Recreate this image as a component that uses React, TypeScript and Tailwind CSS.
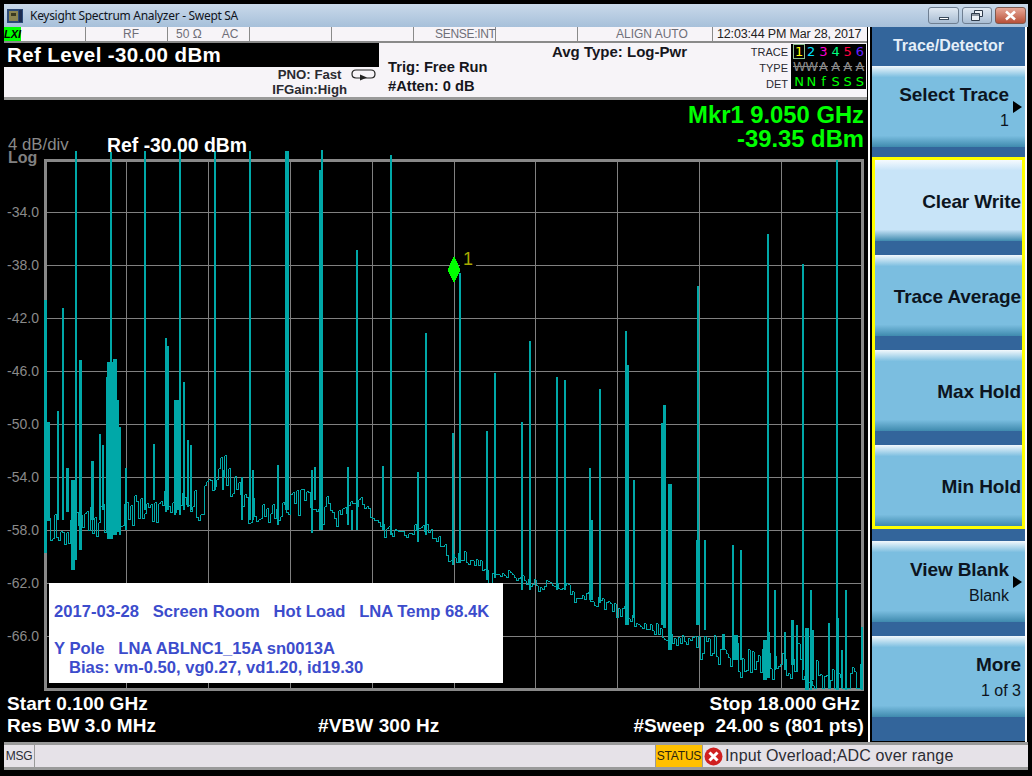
import React from 'react';

const TEAL = '#00a8a8';
const GRID_X = [126, 208, 290, 372, 454, 536, 618, 700, 782];
const GRID_Y = [212, 265, 318, 371, 424, 477, 530, 583, 636];
const AXIS = ['-34.0', '-38.0', '-42.0', '-46.0', '-50.0', '-54.0', '-58.0', '-62.0', '-66.0'];

// noise floor anchors [x, y] read off the trace
const FLOOR: number[][] = [
  [47, 520], [70, 525], [100, 512], [130, 505], [150, 520], [165, 505], [185, 505], [200, 506], [213, 485], [222, 460],
  [232, 485], [245, 508], [262, 518], [285, 513], [300, 502], [320, 510], [340, 514], [352, 506], [362, 503],
  [372, 518], [385, 532], [400, 535], [420, 528], [435, 535], [450, 558], [465, 558], [480, 565], [490, 580],
  [505, 575], [525, 578], [540, 587], [560, 588], [580, 597], [600, 603], [620, 612], [640, 622], [660, 630],
  [680, 640], [700, 640], [720, 656], [740, 660], [760, 660], [780, 666], [800, 662], [820, 680], [840, 688], [858, 684], [864, 660],
];

// [x, top, bottom, width]
const SPIKES: number[][] = [
  [44, 300, 553, 3], [46, 422, 521, 4], [57, 411, 520, 2], [62, 308, 520, 2], [66, 468, 512, 3], [71, 480, 570, 4], [75, 151, 560, 2], [79, 360, 550, 3],
  [91, 461, 520, 3], [99, 434, 520, 2], [102, 445, 510, 2], [106, 377, 530, 2], [110, 152, 539, 2], [107, 362, 539, 6], [113, 359, 535, 4], [117, 400, 532, 2], [119, 427, 535, 2], [125, 468, 530, 2],
  [144, 151, 510, 2], [153, 444, 500, 2], [165, 338, 512, 2], [167, 346, 510, 2], [174, 400, 515, 2], [179, 150, 515, 2], [176, 400, 510, 4], [183, 382, 510, 2], [187, 440, 507, 2], [190, 445, 510, 2],
  [214, 151, 490, 2], [222, 470, 490, 2], [241, 477, 520, 2], [249, 151, 520, 2], [252, 470, 520, 2], [277, 465, 525, 2], [285, 151, 510, 4], [311, 470, 533, 2], [314, 467, 500, 2], [321, 150, 530, 2], [319, 170, 530, 4],
  [347, 467, 525, 2], [351, 510, 530, 2], [356, 250, 530, 2], [382, 466, 530, 2], [390, 155, 535, 2], [417, 472, 542, 2], [425, 333, 535, 2],
  [452, 433, 565, 2], [460, 273, 563, 2], [487, 431, 580, 2], [495, 373, 578, 2], [522, 422, 590, 2], [530, 341, 590, 2], [557, 377, 590, 2], [565, 380, 590, 2],
  [590, 468, 600, 2], [591, 520, 600, 3], [600, 389, 603, 2], [626, 331, 625, 2], [627, 365, 625, 3], [634, 480, 618, 2], [662, 423, 625, 2], [664, 405, 628, 3], [669, 484, 650, 4],
  [697, 540, 625, 4], [705, 540, 630, 2], [733, 545, 660, 2], [741, 550, 660, 2], [768, 234, 660, 2], [775, 590, 670, 2], [803, 264, 670, 2], [698, 286, 625, 2],
  [811, 590, 690, 2], [837, 160, 690, 2], [846, 590, 690, 2], [723, 634, 650, 3], [735, 635, 660, 4], [764, 640, 680, 4], [768, 632, 678, 3], [785, 632, 670, 2], [792, 620, 665, 3], [797, 625, 672, 2], [806, 628, 690, 4], [812, 630, 680, 3], [829, 623, 688, 2], [838, 618, 690, 2], [842, 650, 688, 2], [862, 627, 690, 2],
];

function floorAt(x: number) {
  for (let i = 1; i < FLOOR.length; i++) {
    if (x <= FLOOR[i][0]) {
      const [x0, y0] = FLOOR[i - 1];
      const [x1, y1] = FLOOR[i];
      return y0 + ((y1 - y0) * (x - x0)) / (x1 - x0);
    }
  }
  return FLOOR[FLOOR.length - 1][1];
}

// small repeatable jitter so the trace is the same on every load
function tracePath() {
  let seed = 17;
  const rnd = () => {
    seed = (seed * 16807) % 2147483647;
    return seed / 2147483647 - 0.5;
  };
  let d = '';
  for (let x = 47; x <= 864; x += 2) {
    const amp = x < 135 ? 34 : x < 340 ? 30 : x < 560 ? 12 : x < 700 ? 16 : 38;
    const y = Math.min(689, floorAt(x) + rnd() * amp + (x < 135 ? 8 : 0));
    d += d ? ` H${x} V${y.toFixed(0)}` : `M${x} ${y.toFixed(0)}`;
  }
  return d;
}

const Chart: React.FC = () => (
  <svg width={824} height={542} viewBox="44 150 824 542" className="block" shapeRendering="crispEdges">
    {GRID_X.map(x => <rect key={x} x={x} y={160} width={1} height={530} fill="#808080" />)}
    {GRID_Y.map(y => <rect key={y} x={45} y={y} width={818} height={1} fill="#808080" />)}
    <rect x={44} y={159} width={3} height={532} fill="#888888" />
    <rect x={862} y={159} width={3} height={532} fill="#888888" />
    <rect x={44} y={159} width={821} height={3} fill="#888888" />
    <rect x={44} y={688} width={821} height={3} fill="#888888" />
    <path d={tracePath()} fill="none" stroke={TEAL} strokeWidth={1} />
    {SPIKES.map(([x, top, bottom, w], i) => <rect key={i} x={x} y={top} width={w} height={bottom - top} fill={TEAL} />)}
    <rect x={461} y={262} width={16} height={6} fill="#000000" />
    <polygon points="454.5,256 461,269.5 454.5,283 448,269.5" fill="#00ff00" />
  </svg>
);

const SoftKey: React.FC<{ label: string; sub?: string; arrow?: boolean; selected?: boolean; right?: string }> = ({ label, sub, arrow, selected, right = 'pr-[1px]' }) => (
  <div
    className={`relative h-[81px] pt-[2px] flex flex-col justify-center items-end text-[#0c1420] ${right} ${
      selected
        ? 'bg-[linear-gradient(#f5fafe,#c8e4f8_13%,#c8e4f8_86%,#3f8aae)]'
        : 'bg-[linear-gradient(#f2f8fc,#7bbee0_14%,#7bbee0_86%,#3f8aae)]'
    }`}
  >
    <div className="text-[19px] leading-[26px] font-bold tracking-[-0.1px] whitespace-nowrap">{label}</div>
    {sub && <div className="text-[16px] leading-[26px]">{sub}</div>}
    {arrow && <div className="absolute right-[3px] top-[35px] w-0 h-0 border-y-[6px] border-y-transparent border-l-[9px] border-l-black" />}
  </div>
);

const StatusCell: React.FC<{ className?: string; children?: React.ReactNode }> = ({ className = '', children }) => (
  <div className={`h-full shrink-0 border-r border-[#8a8a8a] flex items-center whitespace-pre text-[#6f6f78] text-[12px] ${className}`}>{children}</div>
);

export default function App() {
  return (
    <div className="w-[1032px] h-[776px] bg-black overflow-hidden pt-[4px] font-['Liberation_Sans',sans-serif]">
      {/* window title bar */}
      <div className="mx-[4px] h-[23px] flex items-center bg-[linear-gradient(#c9d9ea,#a7c0da)]">
        <svg width={18} height={16} viewBox="0 0 18 16" className="ml-[2px]">
          <rect x={1} y={1} width={16} height={14} fill="#2c4a78" />
          <rect x={3} y={3} width={9} height={10} fill="#8a8450" />
          <rect x={13} y={2} width={3} height={12} fill="#1c2c50" />
          <rect x={5} y={5} width={5} height={3} fill="#3a3a20" />
        </svg>
        <span className="ml-[6px] text-[12px] font-['Noto_Sans',sans-serif] tracking-[-0.3px] text-[#10141c]">Keysight Spectrum Analyzer - Swept SA</span>
        <div className="ml-auto mr-[2px] flex gap-[3px] h-[17px]">
          <div className="w-[31px] rounded-[3px] border border-[#6f7f92] bg-[linear-gradient(#dfe8f2,#a9bdd3)] flex items-center justify-center">
            <div className="w-[10px] h-[3px] mt-[5px] bg-white border border-[#3a4a5c]" />
          </div>
          <div className="w-[30px] rounded-[3px] border border-[#6f7f92] bg-[linear-gradient(#dfe8f2,#a9bdd3)] flex items-center justify-center">
            <svg width={12} height={11} viewBox="0 0 12 11"><path d="M3.5 3V.5h8v6H9M.5 3.5h8v7h-8zM.5 5h8" fill="#eef3f8" stroke="#2f3c4c" /></svg>
          </div>
          <div className="w-[31px] rounded-[3px] border border-[#7f5a50] bg-[linear-gradient(#e8a898,#b85038)] flex items-center justify-center">
            <svg width={13} height={11} viewBox="0 0 13 11"><path d="M2 1.5l9 8M11 1.5l-9 8" stroke="#ffffff" strokeWidth={2.6} /></svg>
          </div>
        </div>
      </div>

      <div className="flex h-[715px]">
        {/* instrument screen */}
        <div className="w-[863px] ml-[4px] flex flex-col">
          <div className="h-[16px] flex bg-[#f7f4f8] border-b-2 border-[#8a8a8a]">
            <StatusCell className="w-[82px] items-stretch">
              <span className="w-[17px] h-[14px] bg-[#00ff00] text-black text-[11px] font-bold italic leading-[14px] text-center">LXI</span>
            </StatusCell>
            <StatusCell className="w-[82px] pl-[37px]">RF</StatusCell>
            <StatusCell className="w-[82px] pl-[8px]">{'50 Ω      AC'}</StatusCell>
            <StatusCell className="w-[82px]" />
            <StatusCell className="w-[82px]" />
            <StatusCell className="w-[82px] pl-[21px] tracking-[-0.3px]">SENSE:INT</StatusCell>
            <StatusCell className="w-[82px]" />
            <StatusCell className="w-[135px] pl-[38px]">ALIGN AUTO</StatusCell>
            <div className="flex items-center pl-[4px] text-[12.5px] text-[#222] whitespace-nowrap tracking-[-0.15px]">12:03:44 PM Mar 28, 2017</div>
          </div>

          <div className="h-[57px] flex bg-[#f7f4f8] border-b-[3px] border-[#9a9a9a] text-[#16161c]">
            <div className="w-[375px] shrink-0 flex flex-col">
              <div className="h-[24px] bg-black text-white text-[20.5px] font-bold leading-[24px] pl-[3px] tracking-[0.4px]">Ref Level -30.00 dBm</div>
              <div className="flex justify-end pr-[2px]">
                <div className="text-[13.2px] font-bold leading-[15px] text-center text-[#2a2a30]">
                  <div>PNO: Fast</div>
                  <div>IFGain:High</div>
                </div>
                <svg width={26} height={14} viewBox="0 0 26 14" className="ml-[4px] mt-[1px]">
                  <path d="M5 2h15q4 0 4 4t-4 4H5q-4 0-4-4t4-4z" fill="none" stroke="#222" strokeWidth={1.2} />
                  <path d="M9 6.5l7 3-7 3z" fill="#222" />
                </svg>
              </div>
            </div>
            <div className="w-[173px] shrink-0 pl-[9px] pt-[15px] text-[14.7px] font-bold leading-[19px] whitespace-nowrap">
              <div>Trig: Free Run</div>
              <div>#Atten: 0 dB</div>
            </div>
            <div className="w-[190px] shrink-0 text-[15px] leading-[18px] font-bold whitespace-nowrap">Avg Type: Log-Pwr</div>
            <div className="w-[47px] shrink-0 pr-[1px] text-right text-[11px] leading-[16px] pt-[1px] text-[#2a2a30]">
              <div>TRACE</div>
              <div>TYPE</div>
              <div>DET</div>
            </div>
            <div className="w-[75px] h-[45px] bg-black mt-[1px] ml-[2px] pl-[2px] text-[13px] leading-[15px] font-['DejaVu_Sans',sans-serif] grid grid-cols-6 text-center">
              <span className="text-[#ffff00] border border-[#8fbf8f] h-[15px] leading-[13px]">1</span>
              <span className="text-[#00e0ff]">2</span>
              <span className="text-[#ff00d0]">3</span>
              <span className="text-[#00ff80]">4</span>
              <span className="text-[#ff0040]">5</span>
              <span className="text-[#6020ff]">6</span>
              {['W', 'W', 'A', 'A', 'A', 'A'].map((t, i) => (
                <span key={i} className="text-[#8a8a8a] line-through">{t}</span>
              ))}
              {['N', 'N', 'f', 'S', 'S', 'S'].map((t, i) => (
                <span key={i} className="text-[#00ff00]">{t}</span>
              ))}
            </div>
          </div>

          {/* header over the plot */}
          <div className="h-[50px] flex relative z-10">
            <div className="w-[103px] pl-[4px] pt-[38px] text-[#8a8a8a] text-[16.8px] leading-[14px] whitespace-nowrap">4 dB/div</div>
            <div className="pt-[35px] text-white text-[19.4px] font-bold leading-[20px] whitespace-nowrap">Ref -30.00 dBm</div>
            <div className="ml-auto pr-[3px] pt-[3px] text-[#00ff00] text-[23.8px] font-bold leading-[24px] text-right">
              <div>Mkr1 9.050 GHz</div>
              <div>-39.35 dBm</div>
            </div>
          </div>

          <div className="flex h-[542px] relative">
            <div className="w-[40px] shrink-0 text-[#8a8a8a] text-right">
              <div className="h-[36px] text-left pl-[4px] pt-[2px] text-[16px] font-bold leading-[12px] text-[#808080]">Log</div>
              {AXIS.map(a => (
                <div key={a} className="h-[53px] flex items-center justify-end pr-[5px] text-[14px]">{a}</div>
              ))}
            </div>
            <Chart />
            <span className="absolute left-[459px] top-[100px] text-[#a8a800] text-[18px] leading-[18px]">1</span>
            {/* note box over the trace */}
            <div className="absolute left-[45px] top-[433px] w-[454px] h-[100px] bg-white text-[#3c4ccc] text-[16.6px] font-bold whitespace-pre px-[5px] pt-[19px] leading-[19px]">
              <div>{'2017-03-28   Screen Room   Hot Load   LNA Temp 68.4K'}</div>
              <div className="mt-[18px]">{'Y Pole   LNA ABLNC1_15A sn0013A'}</div>
              <div className="pl-[15px]">{'Bias: vm-0.50, vg0.27, vd1.20, id19.30'}</div>
            </div>
          </div>

          <div className="text-white text-[19px] font-bold leading-[22px] flex flex-col pt-[1px] tracking-[0.1px]">
            <div className="flex justify-between pl-[3px] pr-[7px]">
              <span>Start 0.100 GHz</span>
              <span>Stop 18.000 GHz</span>
            </div>
            <div className="flex pl-[3px] pr-[3px] whitespace-pre">
              <span className="w-[311px]">Res BW 3.0 MHz</span>
              <span>#VBW 300 Hz</span>
              <span className="ml-auto">{'#Sweep  24.00 s (801 pts)'}</span>
            </div>
          </div>
        </div>

        {/* softkey panel */}
        <div className="ml-[1px] w-[159px] h-[715px] border-x-[2px] border-white shrink-0">
          <div className="h-[714px] border-l-[2px] border-black bg-[#33659b] flex flex-col">
            <div className="h-[39px] pb-[2px] flex items-center justify-center text-[#e4eef8] text-[16px] font-bold">Trace/Detector</div>
            <SoftKey label="Select Trace" sub="1" arrow right="pr-[16px]" />
            <div className="mt-[10px] border-[3px] border-[#ffff00] flex flex-col gap-[14px]">
              <SoftKey label="Clear Write" selected />
              <SoftKey label="Trace Average" />
              <SoftKey label="Max Hold" />
              <SoftKey label="Min Hold" />
            </div>
            <div className="mt-[12px]">
              <SoftKey label="View Blank" sub="Blank" arrow right="pr-[16px]" />
            </div>
            <div className="mt-[14px]">
              <SoftKey label="More" sub="1 of 3" right="pr-[4px]" />
            </div>
          </div>
        </div>
      </div>

      {/* message bar */}
      <div className="mx-[4px] h-[28px] bg-[#e6e2e8] border-y-[3px] border-[#9a9a9a] flex items-stretch text-[16px] text-[#2c2c34]">
        <div className="w-[31px] border-r border-[#9a9a9a] flex items-center justify-center text-[12px] tracking-[-0.3px]">MSG</div>
        <div className="w-[620px]" />
        <div className="w-[48px] border-x border-[#9a9a9a] bg-[#ffc000] flex items-center justify-center text-[12px] text-[#2a2410] tracking-[-0.2px]">STATUS</div>
        <div className="flex items-center pl-[1px] gap-[2px] whitespace-nowrap">
          <svg width={19} height={19} viewBox="0 0 19 19">
            <circle cx={9.5} cy={9.5} r={9} fill="#d02020" />
            <path d="M5.5 5.5l8 8M13.5 5.5l-8 8" stroke="#ffffff" strokeWidth={3} />
          </svg>
          <span className="tracking-[0.15px]">Input Overload;ADC over range</span>
        </div>
      </div>
    </div>
  );
}
